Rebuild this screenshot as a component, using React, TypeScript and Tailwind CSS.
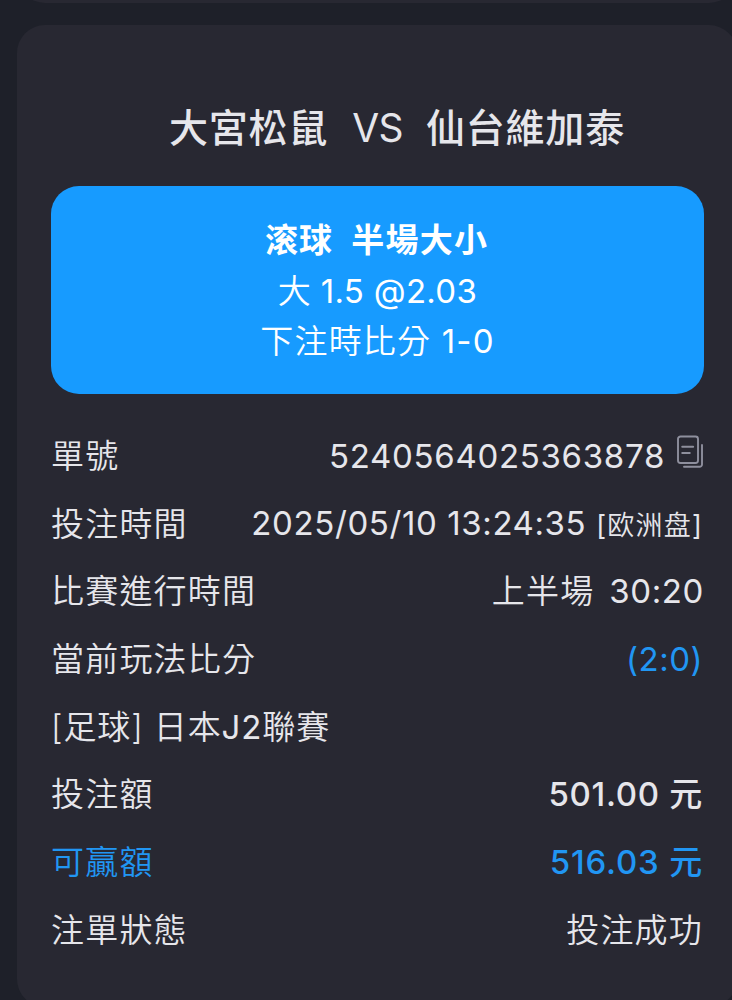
import React from 'react';

interface DetailRow {
  label: React.ReactNode;
  value?: React.ReactNode;
  className?: string;
}

const CopyIcon: React.FC = () => (
  <svg width="28" height="34" viewBox="0 0 28 34" fill="none" stroke="#8e8f9d" strokeWidth="1.9" strokeLinecap="round" strokeLinejoin="round">
    <rect x="2" y="1.5" width="20" height="26.5" rx="2.5" />
    <path d="M26 10V29.4a2.4 2.4 0 0 1-2.4 2.4H8" />
    <path d="M6.2 11.7h11M6.2 18h7.6" />
  </svg>
);

const rows: DetailRow[] = [
  {
    label: '單號',
    value: (
      <div className="-mr-[1px] flex items-center">
        <span className="font-[385] tracking-[0.7px]">5240564025363878</span>
        <div className="ml-[11px] -mt-[7px]">
          <CopyIcon />
        </div>
      </div>
    ),
  },
  {
    label: '投注時間',
    value: (
      <div className="flex items-baseline pt-[1px]">
        <span className="font-[385] tracking-[0.6px]">2025/05/10 13:24:35</span>
        <span className="ml-[10px] text-[27px] tracking-[1.2px]">
          <span className="font-normal">[</span>欧洲盘<span className="font-normal">]</span>
        </span>
      </div>
    ),
  },
  {
    label: '比賽進行時間',
    value: (
      <div className="-mr-[1px] flex items-baseline">
        <span>上半場</span>
        <span className="ml-[15px] font-[385] tracking-[0.6px]">30:20</span>
      </div>
    ),
  },
  { label: '當前玩法比分', value: <span className="font-[385] tracking-[0.5px] text-[#2196f3]">(2:0)</span> },
  {
    label: (
      <span className="tracking-[0.9px]">
        [足球] 日本<span className="font-[385]">J2</span>聯賽
      </span>
    ),
  },
  { label: '投注額', value: <span className="font-medium tracking-[0.7px]">501.00 元</span> },
  { label: '可贏額', value: <span className="font-medium tracking-[0.8px]">516.03 元</span>, className: 'text-[#2196f3]' },
  { label: '注單狀態', value: '投注成功' },
];

const App: React.FC = () => {
  return (
    <main className="h-[1000px] w-[732px] overflow-hidden bg-[#1e2029] font-['Inter','Noto_Sans_CJK_TC',sans-serif] text-[#e6e6eb]">
      {/* bottom edge of the previous slip */}
      <div className="ml-[17px] h-[3px] w-[720px] overflow-hidden">
        <div className="-mt-[57px] h-[60px] rounded-[28px] bg-[#282832]" />
      </div>
      <section className="mt-[22px] ml-[17px] h-[982px] w-[720px] rounded-[28px] bg-[#282832] pt-[73px] pr-[34px] pl-[34px]">
        <h1 className="ml-[40px] flex h-[60px] items-center justify-center text-[39px] font-medium whitespace-nowrap tracking-[0.8px]">
          <span>大宮松鼠</span>
          <span className="mr-[23px] ml-[24px] font-[430] tracking-[-0.6px]">VS</span>
          <span>仙台維加泰</span>
        </h1>
        <div className="-mr-[1px] mt-[28px] flex h-[208px] flex-col items-center rounded-[28px] bg-[#179bff] pt-[29px] text-[33px] leading-[50.5px] text-white">
          <p className="-ml-[2px] font-bold tracking-[1.2px]">
            <span>滚球</span>
            <span className="ml-[18px]">半場大小</span>
          </p>
          <p className="font-[350] tracking-[0.3px]">
            大 <span className="font-[385]">1.5 @2.03</span>
          </p>
          <p className="font-[350] tracking-[1.2px]">
            下注時比分 <span className="font-[385]">1-0</span>
          </p>
        </div>
        <div className="mt-[28px] text-[33px] leading-[48px] font-[350] tracking-[1.2px]">
          {rows.map((row, index) => (
            <div key={index} className={`flex h-[67.7px] items-center justify-between whitespace-nowrap ${row.className ?? ''}`}>
              <span>{row.label}</span>
              {row.value}
            </div>
          ))}
        </div>
      </section>
    </main>
  );
};

export default App;
